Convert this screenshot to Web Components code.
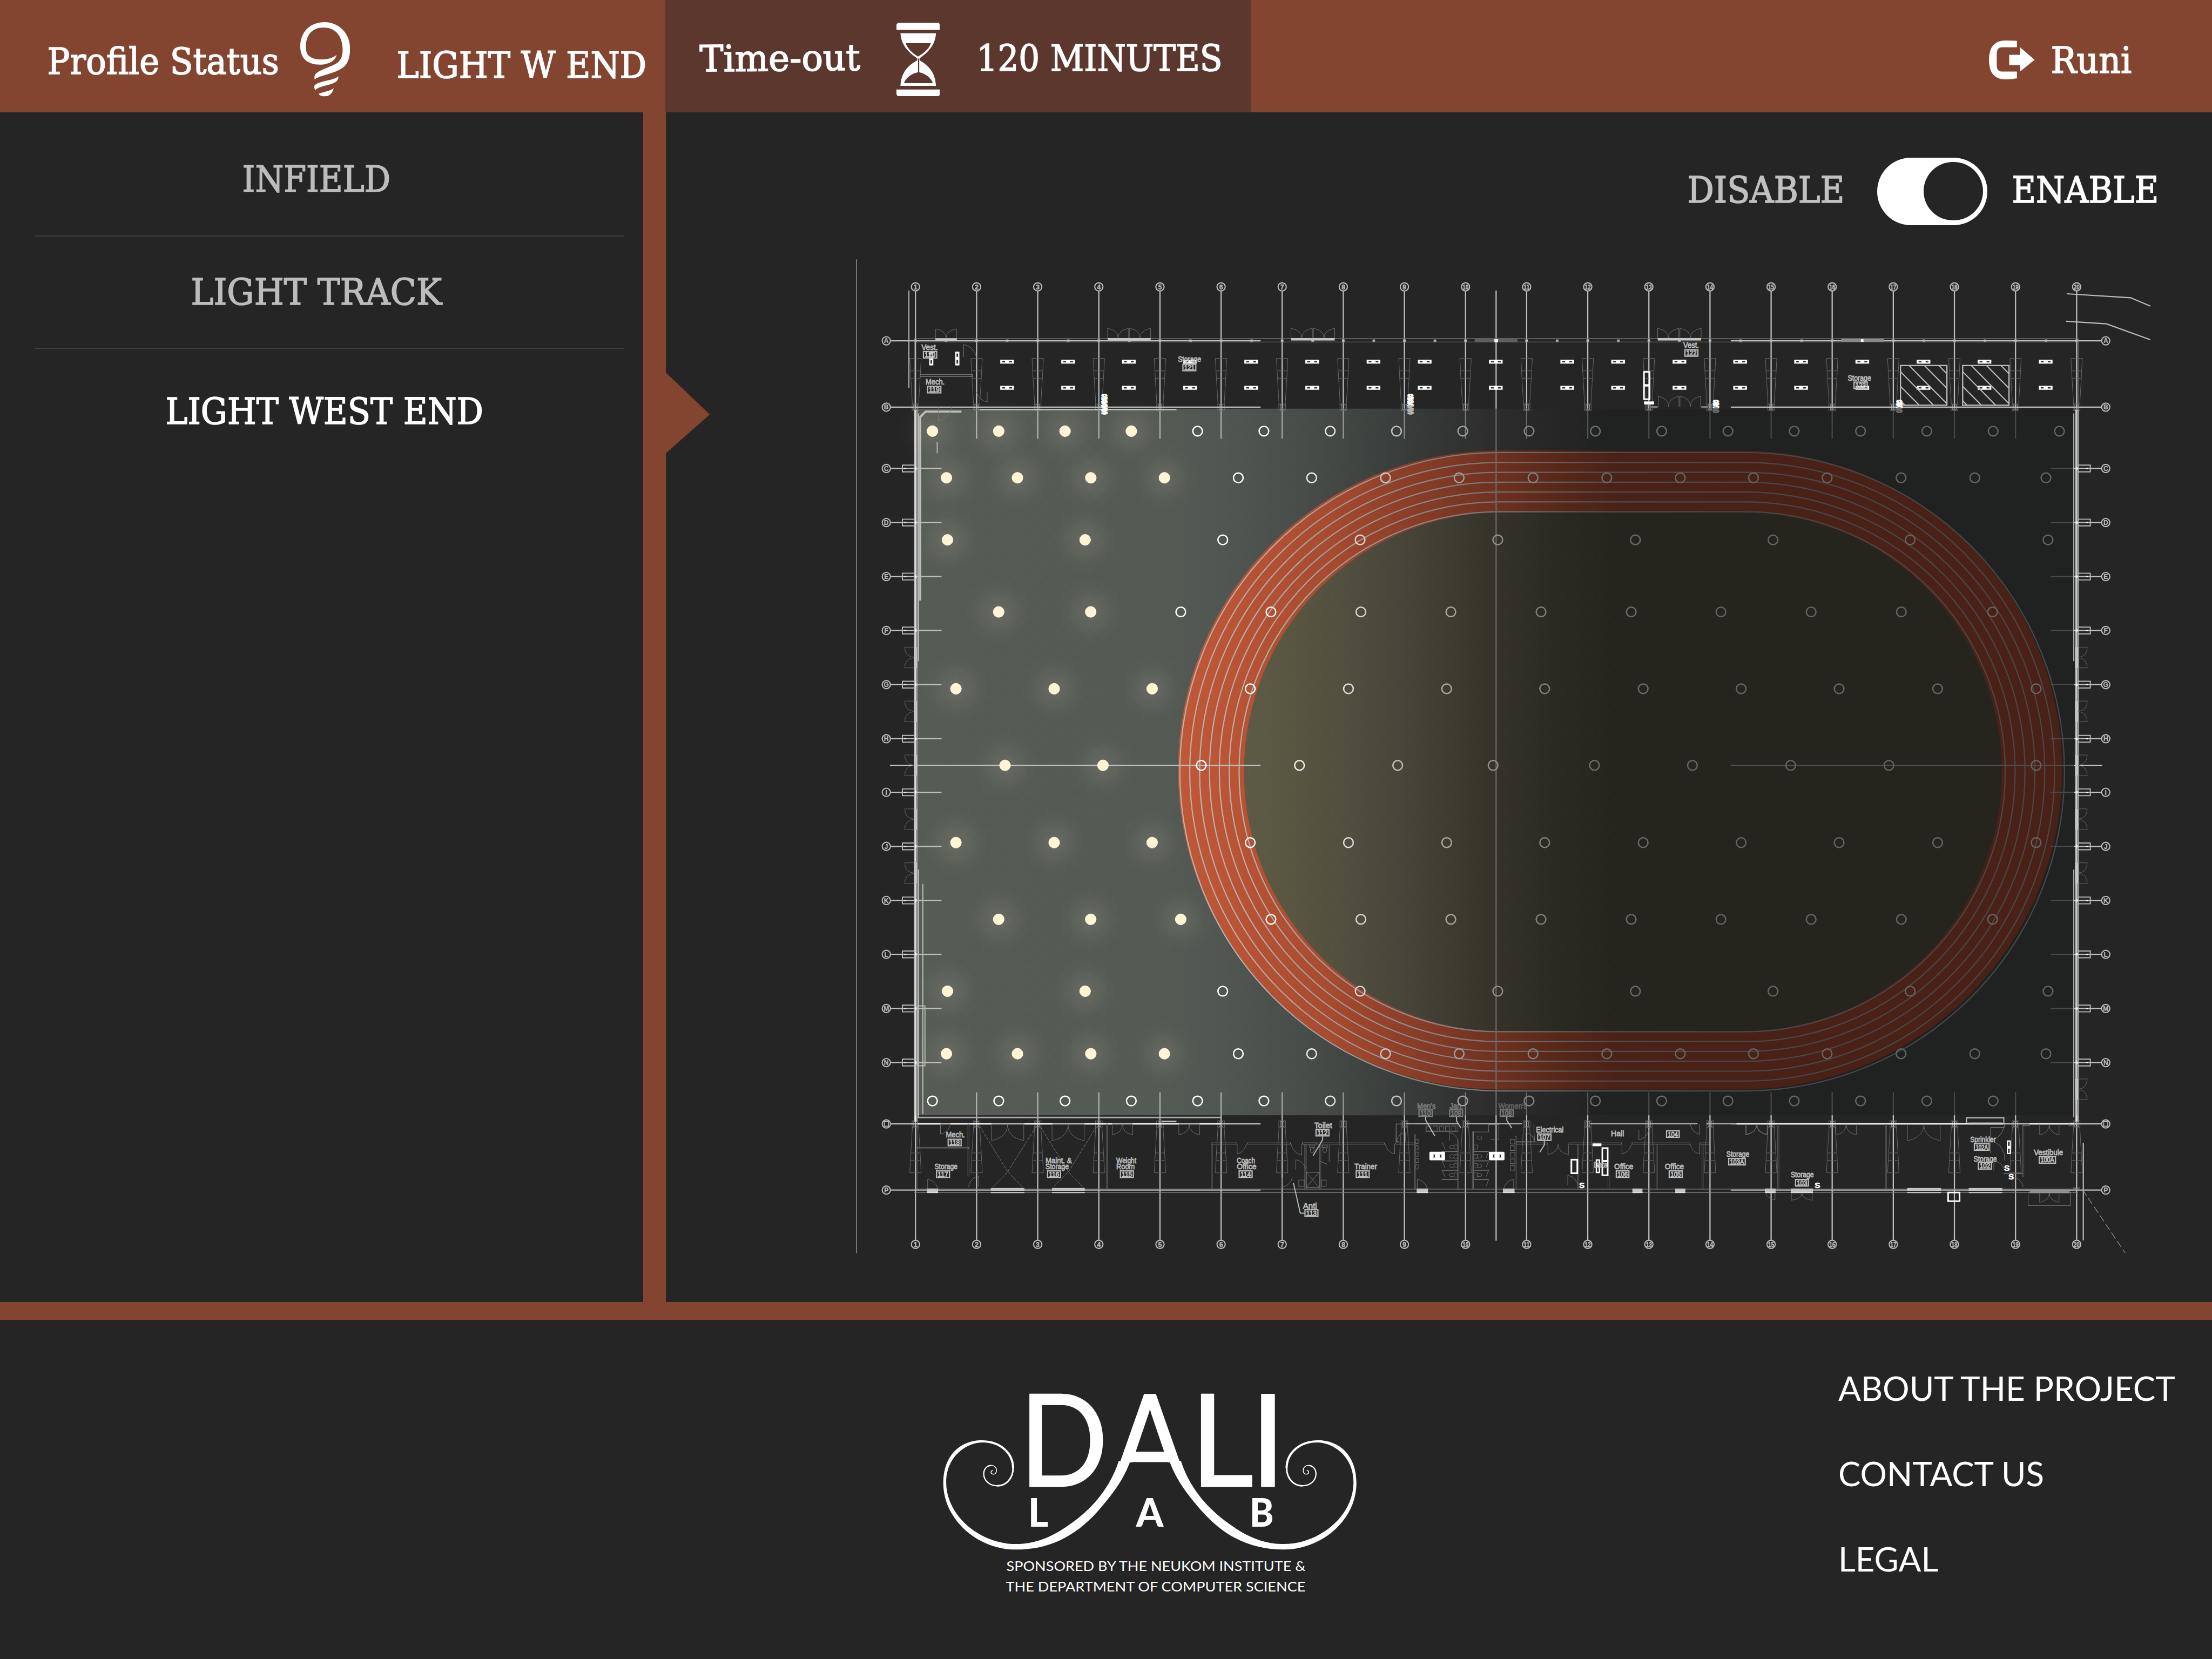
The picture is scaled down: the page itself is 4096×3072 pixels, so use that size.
<!DOCTYPE html>
<html lang="en">
<head>
<meta charset="utf-8">
<title>Lighting control</title>
<style>
  /* 1rem equals 100 design units */
  html { font-size: 95.993px; }
  body { margin: 0; background: #252525; color: #fff; width: 4096px; height: 3072px; overflow: hidden; }
</style>
</head>
<body>
<app-shell>
  <status-bar slot="top">
    <fit-text slot="profile" w="4.42">Profile Status</fit-text>
    <fit-text slot="profile-value" w="4.77">LIGHT W END</fit-text>
    <fit-text slot="timeout" w="3.05">Time-out</fit-text>
    <fit-text slot="timeout-value" w="4.69">120 MINUTES</fit-text>
    <fit-text slot="user" w="1.51">Runi</fit-text>
  </status-bar>
  <profile-list slot="side">
    <profile-item gap="first"><fit-text w="2.81">INFIELD</fit-text></profile-item>
    <profile-item><fit-text w="4.79">LIGHT TRACK</fit-text></profile-item>
    <profile-item active><fit-text w="6.08">LIGHT WEST END</fit-text></profile-item>
  </profile-list>
  <map-panel slot="main">
    <fit-text slot="off" w="2.98">DISABLE</fit-text>
    <fit-text slot="on" w="2.78">ENABLE</fit-text>
    <floor-plan></floor-plan>
  </map-panel>
  <page-footer slot="bottom">
    <fit-text slot="link" face="sans" w="6.5">ABOUT THE PROJECT</fit-text>
    <fit-text slot="link" face="sans" w="3.97">CONTACT US</fit-text>
    <fit-text slot="link" face="sans" w="1.93">LEGAL</fit-text>
  </page-footer>
</app-shell>

<script>
const shadow = (el, html) => { const r = el.attachShadow({ mode: 'open' }); r.innerHTML = html; return r; };

/* A single line whose box is exactly its cap height tall and w rem wide. */
class FitText extends HTMLElement {
  constructor() {
    super();
    shadow(this, `<style>
      :host { display: block; flex: none; height: .51rem; white-space: nowrap; text-align: left;
              font: 400 .70rem/.755 "DejaVu Serif", serif; -webkit-text-stroke: 1.7px currentColor; }
      :host([face=sans]) { font: 400 .655rem/.666 Lato, sans-serif; height: .47rem; -webkit-text-stroke: 0; }
      span { display: inline-block; transform-origin: 0 100%; vertical-align: top; }
    </style><span><slot></slot></span>`);
  }
  connectedCallback() {
    const w = +this.getAttribute('w'), bleed = this.hasAttribute('face') ? 0 : .05;
    this.style.width = w + 'rem';
    const s = this.shadowRoot.querySelector('span');
    const k = (w + bleed) * 95.993 / s.getBoundingClientRect().width;
    s.style.transform = `translateX(${-bleed / 2}rem) scaleX(${k.toFixed(4)})`;
  }
}

class AppShell extends HTMLElement {
  constructor() {
    super();
    shadow(this, `<style>
      :host { display: flex; flex-direction: column; width: 4096px; height: 3072px; background: #252525; }
      .mid { display: flex; height: 22.95rem; flex: none; }
    </style>
    <slot name="top"></slot>
    <div class="mid"><slot name="side"></slot><slot name="main"></slot></div>
    <slot name="bottom"></slot>`);
  }
}

class StatusBar extends HTMLElement {
  constructor() {
    super();
    shadow(this, `<style>
      :host { display: flex; height: 2.17rem; flex: none; background: #834530; }
      div { display: flex; align-items: flex-start; box-sizing: border-box; height: 100%; }
      .profile { width: 12.83rem; padding-left: .94rem; }
      .timeout { width: 11.3rem; padding-left: .69rem; background: #5c372d; }
      .user { flex: 1; justify-content: flex-end; padding-right: 1.57rem; }
      svg { display: block; flex: none; }
      .bulb { width: .96rem; height: 1.43rem; margin: .43rem .92rem 0 .435rem; }
      .glass { width: .84rem; height: 1.42rem; margin: .44rem .74rem 0 .72rem; }
      .exit { width: .88rem; height: .75rem; margin: .78rem .34rem 0 0; }
      slot[name=profile]::slotted(*) { margin-top: .925rem; }
      slot[name=profile-value]::slotted(*) { margin-top: .995rem; }
      slot[name=timeout]::slotted(*) { margin-top: .865rem; transform: rotate(-.5deg); }
      slot[name=timeout-value]::slotted(*) { margin-top: .86rem; }
      slot[name=user]::slotted(*) { margin-top: .905rem; }
    </style>
    <div class="profile">
      <slot name="profile"></slot>
      <svg class="bulb" viewBox="0 0 107 427" preserveAspectRatio="none" fill="#fff">
        <path d="M52 0C82 0 107 62 107 150C107 236 96 262 78 282C58 304 38 312 31 330C28 300 36 284 58 262C82 238 92 222 91 150C90 80 76 31 50 31C26 31 12 72 12 144C12 196 24 214 44 215C60 215 70 206 78 189C76 220 62 245 42 245C16 244 0 210 0 140C0 60 20 0 52 0Z"/>
        <path d="M82 313C82 338 78 348 62 360C50 368 38 376 32 391C28 366 30 358 44 346C60 334 74 330 82 313Z"/>
        <path d="M72 380C70 400 66 427 52 427C44 426 40 420 40 412C48 402 64 398 72 380Z"/>
      </svg>
      <slot name="profile-value"></slot>
    </div>
    <div class="timeout">
      <slot name="timeout"></slot>
      <svg class="glass" viewBox="0 0 109 426" preserveAspectRatio="none" fill="#fff">
        <path d="M3 1H106L109 12V41H0V12ZM0 387H109V415L106 425H3L0 415Z"/>
        <path fill-rule="evenodd" d="M10 61H99C97 130 80 170 58 206V218C82 250 97 290 99 366H10C12 290 27 250 52 218V206C29 170 12 130 10 61ZM23 119C28 150 40 178 54 196C68 178 82 150 86 119ZM19 350H91C88 322 72 294 57 287V208H54V287C38 294 22 322 19 350Z"/>
      </svg>
      <slot name="timeout-value"></slot>
    </div>
    <div class="user">
      <svg class="exit" viewBox="0 0 88 75" fill="#fff">
        <path d="M54 .5V13H24Q15 14 15 25V49Q15 59 24 60H54V73Q44 75 32 75Q0 75 0 37.500Q0 0 32 0Z"/>
        <path d="M39 27.500H60V13L88 37.300L60 60V47.500H39Z"/>
      </svg>
      <slot name="user"></slot>
    </div>`);
  }
}

class ProfileList extends HTMLElement {
  constructor() {
    super();
    shadow(this, `<style>
      :host { display: block; box-sizing: border-box; flex: none; width: 12.84rem; height: 22.95rem;
              border-right: .44rem solid #834530; padding: .13rem .37rem 0 .68rem; }
    </style><slot></slot>`);
  }
}

class ProfileItem extends HTMLElement {
  constructor() {
    super();
    shadow(this, `<style>
      :host { display: flex; position: relative; justify-content: center; align-items: center; box-sizing: border-box;
              height: 2.175rem; padding-right: .5rem; padding-bottom: .02rem; border-bottom: 2px solid #3d3d3d; color: #bcbcbc; }
      :host([gap=first]) { height: 2.26rem; padding-bottom: 0; padding-top: .06rem; }
      :host([active]) { color: #fff; border: 0; height: 2.42rem; padding-right: .2rem; }
      i { display: none; position: absolute; right: -1.66rem; top: .45rem; width: .85rem; height: 1.56rem;
          background: #834530; clip-path: polygon(0 0, 100% 52%, 0 100%); }
      :host([active]) i { display: block; }
    </style><slot></slot><i></i>`);
  }
}

class MapPanel extends HTMLElement {
  constructor() {
    super();
    shadow(this, `<style>
      :host { display: flex; flex-direction: column; flex: 1; height: 22.95rem; }
      .toggle { display: flex; justify-content: flex-end; align-items: center; height: 1.3rem; margin: .87rem 1.05rem .49rem 0; flex: none; }
      .pill { width: 2.13rem; height: 1.3rem; border-radius: .65rem; background: #fff; display: flex; box-sizing: border-box;
              justify-content: flex-end; align-items: center; padding-right: .09rem; margin: 0 .50rem 0 .66rem; flex: none; }
      .pill b { width: 1.14rem; height: 1.13rem; border-radius: 50%; background: #252525; }
      slot[name=off]::slotted(*) { color: #c1c1c1; margin-bottom: .05rem; }
      slot[name=on]::slotted(*) { margin-bottom: .05rem; }
      .plan { padding-left: 3.56rem; }
    </style>
    <div class="toggle"><slot name="off"></slot><span class="pill"><b></b></span><slot name="on"></slot></div>
    <div class="plan"><slot></slot></div>`);
  }
}

class PageFooter extends HTMLElement {
  constructor() {
    super();
    const swirl = `
      <path d="M673 478C640 650 570 770 500 850C430 935 370 958 320 958C200 958 80 800 80 600C80 450 150 370 205 370V357C125 357 70 450 70 605C70 820 190 990 320 990C430 990 520 920 600 770C660 655 690 580 713 478Z"/>
      <g fill="none" stroke="#fff">
        <path d="M203 363.500C265 363.500 310 430 310 520" vector-effect="non-scaling-stroke" stroke-width="4"/>
        <path d="M310 516C310 580 285 621 256 621" vector-effect="non-scaling-stroke" stroke-width="3"/>
        <path d="M258 621C228 621 209 590 209 552C209 520 222 503 235 503" vector-effect="non-scaling-stroke" stroke-width="2.300"/>
        <path d="M235 503C246 503 253 516 253 531C253 546 248 554 243 554C237 554 233 548 234 541C235 536 238 532 241 533" vector-effect="non-scaling-stroke" stroke-width="1.500"/>
      </g>`;
    shadow(this, `<style>
      :host { display: flex; justify-content: space-between; box-sizing: border-box; flex: 1; border-top: .35rem solid #834530; }
      svg { display: block; flex: none; width: 8.8rem; height: 5rem; margin: .53rem 0 0 17.8rem; overflow: visible; }
      nav { display: flex; flex-direction: column; gap: 1.175rem; margin: 1.09rem .71rem 0 0; }
    </style>
    <svg viewBox="1780 2600 880 500" fill="#fff" font-family="Lato, sans-serif">
      <g font-size="247" stroke="#fff" stroke-width="2.500">
        <text transform="translate(1966 2867.500) scale(.91 1)">D</text>
        <clipPath id="bar"><rect x="2100" y="2600" width="240" height="222"/></clipPath>
        <g clip-path="url(#bar)"><text text-anchor="middle" transform="translate(2218 2867.500) scale(.88 1)">A</text></g>
        <text transform="translate(2296 2867.500) scale(.96 1)">L</text>
        <text transform="translate(2411 2867.500)">I</text>
      </g>
      <g font-size="75" font-weight="900">
        <text x="1983" y="2945.700">L</text>
        <text x="2217.500" y="2945.700" text-anchor="middle">A</text>
        <text transform="translate(2410 2945.700) scale(.94 1)">B</text>
      </g>
      <g font-size="26.500">
        <text x="1941" y="3031.700" textLength="577" lengthAdjust="spacingAndGlyphs">SPONSORED BY THE NEUKOM INSTITUTE &amp;</text>
        <text x="1940" y="3070.700" textLength="578" lengthAdjust="spacingAndGlyphs">THE DEPARTMENT OF COMPUTER SCIENCE</text>
      </g>
      <g transform="translate(1780 2660) scale(.5612 .33333)">${swirl}</g>
      <g transform="translate(2655.500 2660) scale(-.5612 .33333)">${swirl}</g>
    </svg>
    <nav><slot name="link"></slot></nav>`);
  }
}

class FloorPlan extends HTMLElement {
  constructor() {
    super();
    /* Sheets: origin and units per grid step of each part of the survey */
    const S = { a: [1640, 490, .574, 1/3], b: [2500, 490, .574, 1/3], c: [3350, 490, .5848, 1/3],
                d: [1640, 1980, .574, 1/3], e: [2500, 1980, .574, 1/3], f: [3350, 1980, .5848, 1/3] };
    const X = (s, x) => +(S[s][0] + x * S[s][2]).toFixed(1), Y = (s, y) => +(S[s][1] + y * S[s][3]).toFixed(1);
    const out = [];
    const LINE = '#bcbcbc';
    const ln = (x1, y1, x2, y2, w = 2.4, c = LINE) => out.push(`<path d="M${x1} ${y1}L${x2} ${y2}" stroke="${c}" stroke-width="${w}"/>`);
    const rc = (x1, y1, x2, y2, w = 1, c = LINE, f = 'none') => out.push(`<rect x="${x1}" y="${y1}" width="${(x2-x1).toFixed(1)}" height="${(y2-y1).toFixed(1)}" stroke="${c}" stroke-width="${w}" fill="${f}"/>`);
    const bx = (x1, y1, x2, y2, f = '#c4c4c4') => rc(x1, y1, x2, y2, 0, 'none', f);
    const pl = (s, pts, w = 1, c = '#757575', extra = '') => out.push(`<path fill="none" d="M${pts.map(p => X(s, p[0]) + ' ' + Y(s, p[1])).join('L')}" stroke="${c}" stroke-width="${w}" ${extra}/>`);
    const tx = (x, y, t, o = {}) => out.push(`<text x="${x}" y="${y}" font-size="${o.s || 16}" fill="${o.c || LINE}" stroke="${o.c || LINE}" stroke-width="${o.k ?? .7}" ${o.l ? `textLength="${o.l}" lengthAdjust="spacingAndGlyphs"` : ''} ${o.m ? 'text-anchor="middle"' : ''} ${o.b ? 'font-weight="700"' : ''}>${t}</text>`);
    const col = n => +(1766.3 + (n - 1) * 117.89).toFixed(1);
    const T = '#6a6a6a';

    /* field, track, turf */
    bx(1768, 788, 4001, 2151, 'url(#floor)');
    out.push(`<rect x="2272.700" y="869" width="1705.300" height="1232" rx="616" fill="url(#clay)"/>`);
    out.push(`<rect x="2400" y="988" width="1462" height="1001" rx="498" ry="500" fill="url(#turf)"/>`);
    for (let i = 0; i < 7; i++) {
      const r = 501.5 + 19.03 * i;
      out.push(`<rect x="${2892 - r}" y="${1488.3 - r}" width="${475 + 2*r}" height="${2*r}" rx="${r}" fill="none" stroke="url(#lane)" stroke-width="2.300"/>`);
    }

    /* grid columns */
    for (let n = 1; n <= 20; n++) {
      const x = col(n);
      ln(x, 561, x, 788);
      if (n > 1 && n < 20) { ln(x, 788, x, 846, 2.3, 'url(#lane)'); ln(x, 2106.700, x, 2151, 2.3, 'url(#lane)'); }
      ln(x, 2151, x, 2392);
      for (const y of [553, 2400]) {
        out.push(`<circle cx="${x}" cy="${y}" r="7.900" fill="none" stroke="${LINE}" stroke-width="2.200"/>`);
        tx(x, y + 4.7, n, { s: 13, m: 1, b: 1, k: .4, l: n > 9 ? 11.5 : 0 });
      }
      for (const f of [y => y, y => 2953 - y]) {
        out.push(`<path d="M${x-11} ${f(691)}H${x+11}L${x+9} ${f(729)}L${x+6} ${f(779)}M${x-11} ${f(691)}L${x-9} ${f(729)}L${x-6} ${f(779)}M${x-9.5} ${f(715)}H${x+9.5}M${x-9} ${f(729.3)}H${x+9}" fill="none" stroke="${T}" stroke-width="1"/>`);
        rc(x - 6.5, Math.min(f(779), f(791.5)), x + 6.5, Math.max(f(779), f(791.5)), 1, T);
        rc(x - 3.5, Math.min(f(780), f(790)), x + 3.5, Math.max(f(780), f(790)), 1.1, '#8a8a8a');
      }
      bx(x - 2.5, 654.500, x + 2.5, 659.500, '#c0c0c0');
      if (n < 20) bx(x + 56.4, 654.500, x + 61.4, 659.500, '#aaa');
    }
    ln(2886.300, 560, 2886.300, 788); ln(2886.300, 788, 2886.300, 2151, 2.3, '#6c6c6c'); ln(2886.300, 2151, 2886.300, 2393);
    ln(1652.600, 500, 1652.600, 2417, 1.3, '#aaa');
    ln(1753.600, 560, 1753.600, 748, 2);

    /* grid rows */
    const rows = { A: 657, B: 785, C: 903.3, D: 1007.6, E: 1111.8, F: 1215.8, G: 1320.3, H: 1424.7, I: 1528, J: 1632.3, K: 1736.6, L: 1840.6, M: 1945, N: 2049.3, O: 2167.7, P: 2295.3 };
    for (const [k, y] of Object.entries(rows)) {
      const wide = 'ABOP'.includes(k);
      ln(1719, y, wide ? 2432 : 1816.6, y);
      if (wide) ln(3339, y, 4054, y); else { ln(3956, y, 4001, y, 2.3, '#484848'); ln(4001, y, 4054, y);
        out.push(`<path d="M1765 ${y-6.5}H1741V${y+6.5}H1765M4008 ${y-6.5}H4032.500V${y+6.5}H4008" fill="none" stroke="${LINE}" stroke-width="2"/>`);
        bx(1764.500, y - 2, 1768.500, y + 2, '#fff'); bx(4004.500, y - 2, 4008.500, y + 2, '#fff'); bx(1745, y-1.2, 1748, y+1.2, '#fff'); bx(4025, y-1.2, 4028, y+1.2, '#fff'); }
      for (const x of [1710, 4062.3]) {
        out.push(`<circle cx="${x}" cy="${y}" r="7.900" fill="none" stroke="${LINE}" stroke-width="2.200"/>`);
        if (k === 'O') rc(x - 4, y - 4.5, x + 4, y + 4.5, 1.8);
        else tx(x, y + 4.6, k, { s: 12.5, m: 1, b: 1, k: .2 });
      }
    }
    ln(1717, 1476, 2432, 1476); ln(3339, 1476, 4001, 1476, 2.3, '#4d4d4a'); ln(4001, 1476, 4055.7, 1476);

    /* side walls */
    ln(1764, 790, 1764, 2163, 2); ln(1769, 790, 1769, 2163, 2); ln(1766.500, 790, 1766.500, 2163, 1.5, '#fff');
    ln(4009, 790, 4009, 2163, 2); ln(4004.500, 790, 4004.500, 2163, 1.3, '#ddd'); ln(4006.500, 790, 4006.500, 2163, 1.6, '#fff');
    ln(1772, 797, 1772, 1275, 2); ln(1772, 1677, 1772, 2155, 2);
    ln(4000.700, 797, 4000.700, 1275, 2); ln(4000.700, 1677, 4000.700, 2155, 2);
    out.push(`<path d="M1775.500 1158V804L1786 793.500H1855" fill="none" stroke="#bdbdbd" stroke-width="4"/>`);
    ln(1780.500, 1705, 1780.500, 2149, 2); rc(1771, 1940, 1784.6, 2055.5, 2);
    ln(X('a',293), Y('a',1087), X('a',293), Y('a',1152), 2);
    for (const y of [1268, 1372, 1476, 1580, 1684]) {
      bx(1763.500, y - 20, 1769.500, y + 20); bx(4003, y - 20, 4009.600, y + 20);
      for (const [a, b] of [[1764, 1745.4], [4009, 4026.7]])
        out.push(`<path d="M${a} ${y-20}H${b}Q${b} ${y-2} ${a} ${y}Q${b} ${y+2} ${b} ${y+20}H${a}" fill="none" stroke="${T}" stroke-width="1"/>`);
    }
    bx(4003, 2081, 4009, 2121); out.push(`<path d="M4009 2081H4026.700Q4026 2099 4009 2101Q4026 2103 4026.700 2121H4009" fill="none" stroke="${T}"/>`);

    /* north and south walls */
    for (const y of [652.7, 659.3]) ln(1764, y, 4009, y, 1.2, '#747474');
    for (const y of [2293.5, 2300]) ln(1764, y, 4009, y, 1.2, '#848484');
    ln(1764, 652, 1764, 790, 1.2, '#848484'); ln(4009, 652, 4009, 790, 1.2, '#848484');
    ln(1890, 789.700, 2269.700, 789.700, 3);
    ln(1768, 2155.300, 2355, 2155.300, 3.2, '#a9a9a9');
    ln(X('d',1048), Y('d',549), X('d',1097), Y('d',549), 3);
    const arc = (x1, x2, y, h) => { const m = (x1 + x2) / 2; out.push(`<path d="M${x1} ${y}V${y+h}Q${m} ${y+h*.8} ${m} ${y}Q${m} ${y+h*.8} ${x2} ${y+h}V${y}" fill="none" stroke="#707070" stroke-width="1"/>`); };
    bx(X('a',287), 652, X('a',359), 657); arc(X('a',288), X('a',358), 652, -18);
    for (const [x1, x2] of [[2137, 2220], [2490.7, 2575], [3198, 3281.8]]) { bx(x1, 651.700, x2, 656.500); const m = (x1+x2)/2; arc(x1, m - 1, 652, -19); arc(m + 1, x2, 652, -19); }
    arc(3199, 3239, 784, -20); arc(3241, 3281, 784, -20); bx(3185, 783, 3198, 787, '#777'); bx(3282, 783, 3295, 787, '#777');
    bx(2845, 653, 2927.600, 660, '#5f5f5f'); bx(3551.800, 653, 3634, 659, '#8a8a8a'); bx(2883, 654, 2890, 660, '#fff'); bx(3590, 654, 3595, 659, '#fff');

    for (const [s, a, b] of [['d',228,304],['d',338,475],['d',586,680],['d',788,880],['d',950,1105],['d',1175,1246],['e',570,760],['e',370,545],['e',990,1350],['e',1380,1568],['f',0,880],['f',967,1120]])
      ln(X(s,a), 2167.5, X(s,b), 2167.5, s === 'e' ? 2 : 2.6, s === 'e' ? '#b0b0b0' : '#f2f2f2');
    for (const [s, a, b] of [['d',1214,1300],['d',1335,1480],['d',1520,1568],['e',22,298],['e',335,400],['e',740,845],['e',918,1095],['e',1130,1325],['e',1358,1392]])
      rc(X(s,a), Y(s,673), X(s,b), Y(s,680), 1, '#8a8a8a');
    for (const [s, a, b, y1, y2, f] of [['d',259,296,937,962],['d',473,586,934,950],['d',679,789,934,950],['e',406,444,937,962],['e',696,735,937,962],['e',1131,1165,937,962],['e',1275,1309,937,962],['f',94,129,937,962],['f',179,252,937,962],['f',563,675,934,950],['f',766,877,934,950],['f',967,1099,950,958,'#8a8a8a']]) {
      bx(X(s,a), Y(s,y1), X(s,b), Y(s,y2), f); ln(X(s,a), Y(s,961), X(s,b), Y(s,961), 1.5, '#e5e5e5');
    }

    /* partitions and doors */
    for (const [s, x, y1, y2] of [['d',398,563,865],['d',863,563,940],['d',1216,680,940],['d',1530,680,940],['e',33,685,940],['e',82,685,940],['e',401,625,940],['e',545,660,940],['e',595,608,940],['e',739,635,940],['e',949,680,940],['e',1051,860,940],['e',1213,680,940],['e',1367,680,940],['f',138,565,940],['f',493,565,940],['f',946,565,870]])
      rc(X(s,x-2), Y(s,y1), X(s,x+2), Y(s,y2), 1, '#626262');
    rc(X('d',226), Y('d',698), X('d',398), Y('d',707), 1, '#777');
    rc(X('a',235), Y('a',697), X('a',411), Y('a',709), 1, '#888');
    ln(X('d',225), 2167, X('d',225), 2293, 1, '#777');
    for (const [s, a, b, h] of [['d',475,584,32],['d',679,787,32],['d',881,950,21],['d',1105,1175,21],['e',1513,1586,20],['f',31,101,21],['f',328,396,21],['f',564,672,32],['f',1000,1064,21]]) arc(X(s,a), X(s,b), 2168, h);
    arc(X('e',847), X('e',916), Y('e',680), 20); arc(X('f',181), X('f',250), 2301, 14); arc(X('f',1000), X('f',1064), 2301, 18);
    rc(X('f',962), 2300, X('f',1102), Y('f',1036), 1, '#777');
    const door = (s, hx, hy, ex, ey) => out.push(`<path d="M${X(s,hx)} ${Y(s,hy)}V${Y(s,ey)}Q${X(s,hx + (ex-hx)*.8)} ${Y(s,hy + (ey-hy)*.8)} ${X(s,ex)} ${Y(s,hy)}" fill="none" stroke="#747474" stroke-width="1"/>`);
    for (const d of [['a',382,595,425,522],['a',461,797,425,855],['a',297,885,342,965],['d',304,563,338,623],['d',261,937,295,883],['d',432,925,398,865],['d',1301,680,1332,737],['d',1518,680,1482,743],['d',1452,873,1487,930],['d',1498,827,1533,770],['e',332,680,300,737],['e',516,660,545,612],['e',408,937,442,883],['e',732,937,698,883],['e',368,665,338,610],['e',773,665,803,612],['e',914,917,948,860],['e',1096,680,1128,737],['e',1153,598,1187,655],['e',1357,563,1325,623],['e',1357,680,1325,737],['f',127,962,96,1003],['f',838,583,882,660],['f',838,733,882,660],['f',849,832,884,775],['f',912,928,946,868]]) door(...d);
    for (const p of [[[437,580],[530,840],[475,937]],[[625,580],[530,840],[584,937]],[[640,580],[734,840],[679,937]],[[828,580],[734,840],[787,937]]]) pl('d', p, 1, '#7e7e7e', 'stroke-dasharray="6 2"');

    /* wash rooms */
    for (let i = 0; i < 5; i++) rc(X('e',440+i*21), Y('e',578), X('e',454+i*21), Y('e',604), 1, '#707070');
    rc(X('e',437), Y('e',570), X('e',545), Y('e',608), 1, '#666');
    for (let i = 0; i < 5; i++) { rc(X('e',721), Y('e',652+i*38), X('e',736), Y('e',679+i*38), 1, '#777'); rc(X('e',403), Y('e',652+i*37), X('e',411), Y('e',676+i*37), 1, '#777'); }
    for (let i = 0; i < 4; i++) {
      const y = 697 + i * 54;
      ln(X('e',490), Y('e',y+26), X('e',545), Y('e',y+26), 1.6, '#777');
      out.push(`<ellipse cx="${X('e',524)}" cy="${Y('e',y)}" rx="4.500" ry="3.200" fill="none" stroke="#777"/>`); rc(X('e',532), Y('e',y-12), X('e',543), Y('e',y+12), 1, '#666');
      out.push(`<ellipse cx="${X('e',617)}" cy="${Y('e',y+(i ? 0 : -54))}" rx="4.500" ry="3.200" fill="none" stroke="#777"/>`); rc(X('e',599), Y('e',y-12), X('e',610), Y('e',y+12), 1, '#666');
      ln(X('e',598), Y('e',y+26), X('e',648), Y('e',y+26), 1.6, '#777');
      pl('e', [[648,y+26],[640,y+62]], 1); pl('e', [[492,y-26],[502,y+14]], 1);
    }
    pl('e', [[597,722],[597,610],[648,610],[648,567]]); pl('e', [[648,567],[682,567],[682,653],[655,653]]);
    pl('e', [[345,665],[337,665],[337,563],[400,563]], 1, '#999'); pl('e', [[800,563],[800,610],[803,665],[740,665]], 1, '#777');
    rc(X('e',35), Y('e',843), X('e',78), Y('e',930), 1, '#888'); pl('e', [[35,843],[78,930]]); pl('e', [[78,843],[35,930]]);
    rc(X('e',10), Y('e',888), X('e',28), Y('e',925), 1, '#777'); rc(X('e',86), Y('e',888), X('e',102), Y('e',925), 1, '#777');
    for (const x of [55, 97]) { rc(X('e',x-9), Y('e',686), X('e',x+9), Y('e',698), 1, '#777'); out.push(`<ellipse cx="${X('e',x)}" cy="${Y('e',714)}" rx="3.600" ry="5.500" fill="none" stroke="#777"/>`); }
    pl('e', [[82,780],[107,797]], 1.2); pl('e', [[112,685],[112,782]], 1);
    pl('f', [[882,850],[944,850]], 1.6); pl('f', [[884,565],[884,583],[838,583]], 1, '#888'); pl('f', [[884,733],[884,775]]);
    out.push(`<path d="M${X('f',759)} ${Y('f',560)}V${Y('f',528)}H${X('f',882)}V${Y('f',560)}" fill="none" stroke="#bdbdbd" stroke-width="2"/>`); bx(X('f',765), Y('f',555), X('f',877), Y('f',566), '#d0d0d0');
    rc(X('f',947), Y('f',565), X('f',967), Y('f',574), 1, '#888'); rc(X('f',1098), Y('f',557), X('f',1115), Y('f',574), 1, '#888');

    /* ceiling fixtures */
    for (const x of [1943, 2060.7, 2177.8, 2296, 2413.8, 2531.5, 2649.8, 2748.5, 2885.7, 3023.5, 3121.6, 3240, 3357, 3474.6, 3592.7, 3710.8, 3828.4, 3946.5])
      for (const y of [697.3, 747.7]) { bx(x - 13.2, y - 3.8, x + 13.2, y + 3.8, '#fff'); bx(x - 9.5, y - 1.4, x - 4, y + 1.4, '#333'); bx(x + 4, y - 1.4, x + 9.5, y + 1.4, '#333'); }
    for (const x of [1796.7, 1847]) { bx(x - 4, 678, x + 4, 704.5, '#fff'); bx(x - 1.5, 681.500, x + 1.5, 688, '#333'); bx(x - 1.5, 694, x + 1.5, 701, '#333'); }
    rc(X('b',1170), Y('b',681), X('b',1189), Y('b',839), 3, '#fff'); bx(X('b',1168), Y('b',752), X('b',1190), Y('b',766), '#fff'); bx(X('b',1170), Y('b',852), X('b',1204), Y('b',869), '#fff');
    rc(X('e',926), Y('e',770), X('e',946), Y('e',848), 3.2, '#fff'); rc(X('e',1030), Y('e',703), X('e',1048), Y('e',860), 3, '#fff'); bx(X('e',1028), Y('e',772), X('e',1050), Y('e',784), '#fff');
    bx(X('e',997), Y('e',676), X('e',1027), Y('e',692), '#fff'); rc(X('e',1010), Y('e',772), X('e',1020), Y('e',844), 2.6, '#fff'); bx(X('e',1008), Y('e',800), X('e',1022), Y('e',815), '#fff');
    for (const x of [449, 649]) { out.push(`<rect x="${X('e',x)}" y="${Y('e',724)}" width="30" height="16.500" rx="2" fill="#fff"/>`); for (const d of [16, 38]) { bx(X('e',x+d-4), Y('e',741), X('e',x+d+4), Y('e',744), '#222'); bx(X('e',x+d-2), Y('e',741), X('e',x+d+2), Y('e',757), '#222'); bx(X('e',x+d-4), Y('e',754), X('e',x+d+4), Y('e',757), '#222'); } }
    rc(X('f',698), Y('f',960), X('f',736), Y('f',1010), 3, '#fff'); rc(X('f',894), Y('f',662), X('f',903), Y('f',734), 2.4, '#fff'); bx(X('f',893), Y('f',690), X('f',905), Y('f',706), '#fff');

    /* hatched shafts */
    for (const o of [0, 205]) {
      rc(X('c',541+o), Y('c',644), X('c',694+o), Y('c',874), 2.4);
      for (const [a, b, c, d] of [[570,645,694,865],[620,645,694,776],[668,645,694,692],[541,680,649,872],[541,765,602,872],[541,848,555,872]]) pl('c', [[a+o,b],[c+o,d]], 2.2, LINE);
    }
    pl('c', [[1090,229],[1300,252],[1365,300]], 2.2, LINE); pl('c', [[1087,388],[1220,403],[1365,495]], 2.2, LINE);
    ln(X('f',1144), Y('f',672), X('f',1144), Y('f',1237), 2.3);
    pl('f', [[1110,934],[1138,934],[1150,965],[1282,1310]], 1.2, '#999', 'stroke-dasharray="14 6"');

    /* switches */
    const sw = { s: 12.5, m: 1, b: 1, l: 12, k: 1.6 };
    for (const [s, x, ys] of [['a',855,[838,860,882,904,926]],['b',385,[838,860,882]],['b',1412,[872,893]],['c',537,[872,893]]]) for (const y of ys) tx(X(s,x), Y(s,y), 'S', { ...sw, c: '#fff' });
    for (const [s, x, y, c] of [['b',385,904,'#b5b5b5'],['b',385,926,'#b5b5b5'],['b',1412,918,'#6a6a6a'],['c',537,918,'#6a6a6a']]) tx(X(s,x), Y(s,y), 'S', { ...sw, c });
    for (const [s, x, y] of [['e',961,936],['f',892,833],['f',906,884],['f',267,936]]) tx(X(s,x), Y(s,y), 'S', { s: 16, m: 1, b: 1, c: '#fff' });

    /* room names */
    const D = '#7c7c7c';
    for (const [s, x1, x2, y, t, c] of [['a',240,295,555,'Vest.'],['a',254,318,755,'Mech.'],['a',1102,1180,622,'Storage'],['b',1302,1355,542,'Vest.'],['c',367,444,731,'Storage'],
      ['d',322,386,642,'Mech.'],['d',284,361,825,'Storage'],['d',657,745,790,'Maint. &amp;'],['d',657,735,825,'Storage'],['d',895,962,790,'Weight'],['d',895,957,825,'Room'],['d',1300,1361,790,'Coach'],['d',1300,1366,825,'Office'],
      ['e',62,122,587,'Toilet'],['e',197,273,825,'Trainer'],['e',24,71,1052,'Anti'],['e',408,470,474,"Men's",D],['e',517,562,474,'Jan.',D],['e',681,777,474,"Women's",'#646464'],['e',807,900,613,'Electrical'],['e',1059,1103,635,'Hall'],['e',1002,1047,817,'Data'],['e',1070,1134,825,'Office'],['e',1240,1304,825,'Office'],['e',1447,1524,753,'Storage'],
      ['f',179,255,873,'Storage'],['f',771,855,668,'Sprinkler'],['f',782,859,780,'Storage'],['f',981,1077,743,'Vestibule']])
      tx(X(s,x1), Y(s,y), t, { l: (X(s,x2) - X(s,x1)).toFixed(1), c, s: 16, k: .9 });
    for (const [s, x1, x2, y, t, c] of [['a',245,293,560,120],['a',259,307,762,119],['a',1117,1164,634,121],['b',1306,1353,550,122],['c',386,433,737,123],
      ['d',328,375,649,118],['d',289,336,832,117],['d',662,709,832,116],['d',907,954,832,115],['d',1306,1353,832,114],
      ['e',66,113,592,112],['e',201,248,832,111],['e',29,76,1057,113],['e',412,460,479,110,D],['e',515,562,479,109,D],['e',685,732,479,108,D],['e',811,859,618,107],['e',1244,1290,600,104],['e',1075,1121,832,106],['e',1253,1300,832,105],['e',1453,1512,760,'103A'],
      ['f',193,239,882,103],['f',783,835,675,'102A'],['f',796,843,784,102],['f',997,1054,750,'100A']]) {
      rc(X(s,x1) + 1, Y(s,y) + 1, X(s,x2) - 1, Y(s,y) + 13.5, 2.3, c || LINE);
      tx((X(s,x1) + X(s,x2)) / 2, Y(s,y) + 12, t, { s: 14, m: 1, k: 1, l: (X(s,x2) - X(s,x1) - 7).toFixed(1), c });
    }
    for (const [s, p] of [['e',[[90,635],[90,655],[58,747]]],['e',[[-8,905],[15,1080],[29,1080]]],['e',[[436,522],[436,540],[467,633]]],['e',[[540,522],[540,545],[555,587]]],['e',[[709,522],[709,543],[726,587]]],['e',[[835,661],[835,685],[820,727]]]]) pl(s, p, 2, LINE);

    /* luminaires */
    const r1 = Array.from({ length: 18 }, (_, i) => +(1799 + i * 127.88).toFixed(1));
    const r2 = [1826, 1963, 2104.5, 2246.5, 2389, 2530.5, 2673, 2815, 2957.5, 3099.8, 3241.6, 3382.8, 3524.9, 3667.5, 3809.7, 3947];
    const r3 = [1828, 2093.5, 2359, 2624, 2889.5, 3155, 3420.5, 3685, 3951];
    const r4 = [1926.8, 2104.3, 2278, 2452, 2625.5, 2799, 2973, 3147, 3320, 3494, 3668, 3844];
    const r5 = [1844.3, 2033.8, 2222.8, 2412, 2601.5, 2791, 2980, 3170, 3359, 3548, 3738, 3928];
    const r6 = [1939, 2128, 2317.5, 2507, 2696.5, 2880.5, 3076, 3265, 3454.6, 3644, 3928];
    const lit = [], glow = [];
    for (const [y, xs, on] of [[831.3, r1, 4], [921.3, r2, 4], [1041, r3, 2], [1180, r4, 2], [1328.3, r5, 3], [1476, r6, 2], [1625, r5, 3], [1773, r4, 3], [1911.7, r3, 2], [2032.3, r2, 4], [2123.3, r1.slice(0, 17), 0]])
      xs.forEach((x, i) => {
        if (i < on) { glow.push(`<circle cx="${x}" cy="${y}" r="66" fill="url(#glow)"/>`); lit.push(`<circle cx="${x}" cy="${y}" r="10.500" fill="#fff5d2" stroke="#fffdf4" stroke-width="1"/>`); }
        else lit.push(`<circle cx="${x}" cy="${y}" r="9.300" fill="none" stroke="url(#ring)" stroke-width="2.600"/>`);
      });
    out.push(...glow, ...lit);

    const grad = (id, stops) => `<linearGradient id="${id}" gradientUnits="userSpaceOnUse" x1="1700" y1="0" x2="4000" y2="0">${stops.map(([x, c]) => `<stop offset="${((x - 1700) / 2300).toFixed(4)}" stop-color="${c}"/>`).join('')}</linearGradient>`;
    shadow(this, `<style>:host { display: block; } svg { display: block; width: 25.8rem; height: 19.5rem; }</style>
    <svg viewBox="1640 483 2580 1950" font-family="'Liberation Sans', sans-serif">
      <defs>
        ${grad('floor', [[1766,'#565c55'],[2240,'#545a54'],[2360,'#505651'],[2500,'#494e4a'],[2591,'#424744'],[2700,'#393d3b'],[2800,'#313433'],[2886,'#2d2c2c'],[3000,'#272626'],[3100,'#1f2220']])}
        ${grad('clay', [[2272,'#c05837'],[2420,'#b65233'],[2560,'#a84b30'],[2700,'#8e3f29'],[2886,'#6f3120'],[3000,'#582819'],[3120,'#4a2117']])}
        ${grad('turf', [[2400,'#5d5b45'],[2500,'#585641'],[2700,'#48463a'],[2886,'#353329'],[3000,'#2b2a21'],[3120,'#25251d']])}
        ${grad('lane', [[1900,'#b8b4b2'],[2400,'#b5b1af'],[2640,'#989694'],[2886,'#757473'],[3100,'#4e4e4e'],[3300,'#484848']])}
        ${grad('ring', [[2400,'#ffffff'],[2560,'#e8e8e8'],[2720,'#b8b8b8'],[2886,'#8e8e8c'],[3080,'#6c6c6a'],[3300,'#636360']])}
        <radialGradient id="glow"><stop offset="0" stop-color="#ffe6c8" stop-opacity=".12"/><stop offset=".35" stop-color="#ffe6c8" stop-opacity=".065"/><stop offset=".7" stop-color="#ffe6c8" stop-opacity=".018"/><stop offset="1" stop-color="#ffe6c8" stop-opacity="0"/></radialGradient>
      </defs>${out.join('')}</svg>`);
  }
}

customElements.define('app-shell', AppShell);
customElements.define('status-bar', StatusBar);
customElements.define('profile-list', ProfileList);
customElements.define('profile-item', ProfileItem);
customElements.define('map-panel', MapPanel);
customElements.define('page-footer', PageFooter);
customElements.define('floor-plan', FloorPlan);
customElements.define('fit-text', FitText);
</script>
</body>
</html>
